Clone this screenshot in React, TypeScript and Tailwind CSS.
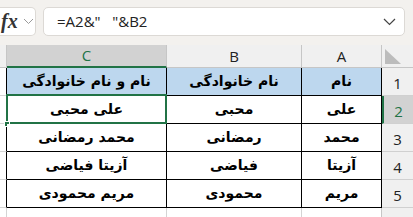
import React from 'react';

const rows = [
  { n: '1', c: 'نام و نام خانوادگی', b: 'نام خانوادگی', a: 'نام', head: true },
  { n: '2', c: 'علی محبی', b: 'محبی', a: 'علی', head: false },
  { n: '3', c: 'محمد رمضانی', b: 'رمضانی', a: 'محمد', head: false },
  { n: '4', c: 'آزیتا فیاضی', b: 'فیاضی', a: 'آزیتا', head: false },
  { n: '5', c: 'مریم محمودی', b: 'محمودی', a: 'مریم', head: false },
];

const arabic = { fontFamily: '"DejaVu Sans", "Noto Sans", sans-serif' };
const ui = { fontFamily: '"Open Sans", "Noto Sans", sans-serif' };

export default function App() {
  return (
    <div className="w-[413px] h-[217px] overflow-hidden bg-white select-none">
      {/* Formula bar */}
      <div className="h-[45px] bg-[#f3f1ee] flex items-start pt-[7px]">
        <div className="w-[36px] h-[29px] bg-white border border-l-0 border-[#dcd9d5] rounded-r-[5px] flex items-center">
          <span className="italic font-semibold text-[20px] leading-none text-[#333] ml-[1px] -mt-[2px]" style={{ fontFamily: '"Liberation Serif", serif' }}>fx</span>
          <svg className="ml-[5px]" width="11" height="7" viewBox="0 0 11 7" fill="none">
            <path d="M1 1l4.5 4.5L10 1" stroke="#9a9a9a" strokeWidth="1" />
          </svg>
        </div>
        <div className="ml-[7px] w-[362px] h-[29px] bg-white border border-[#dcd9d5] rounded-[5px] flex items-center pl-[13px] pr-[8px]">
          <span className="text-[15px] text-[#222] flex-1 whitespace-pre" style={ui}>=A2&amp;"   "&amp;B2</span>
          <svg width="13" height="8" viewBox="0 0 13 8" fill="none">
            <path d="M1 1l5.5 5.5L12 1" stroke="#444" strokeWidth="1.2" />
          </svg>
        </div>
      </div>

      {/* Column headers */}
      <div className="flex h-[23px] bg-[#f0f0f0] text-[15px] text-[#222]" style={ui}>
        <div className="w-[7px] border-r border-b border-[#c6c6c6]" />
        <div className="w-[160px] bg-[#d2d2d2] border-r border-[#c6c6c6] border-b-2 border-b-[#217346] flex items-center justify-center text-[#217346]">C</div>
        <div className="w-[135px] border-r border-b border-[#c6c6c6] flex items-center justify-center">B</div>
        <div className="w-[80px] border-r border-b border-[#c6c6c6] flex items-center justify-center">A</div>
        <div className="w-[31px] border-b border-[#c6c6c6] relative">
          <svg className="absolute left-[3px] top-[4px]" width="17" height="16" viewBox="0 0 17 16">
            <path d="M0 0V15H16Z" fill="#bcbcbc" />
          </svg>
        </div>
      </div>

      {/* Rows */}
      {rows.map((r) => (
        <div key={r.n} className="flex h-[28px]">
          <div className="w-[7px] border-r border-b border-r-black border-b-[#d4d4d4]" />
          <div className={`w-[160px] relative border-r border-b border-black flex items-center justify-center text-[14px] font-bold text-black ${r.head ? 'bg-[#bdd7ee]' : 'bg-white'}`} style={arabic} dir="rtl">
            {r.c}
            {r.n === '2' && (
              <>
                <div className="absolute -left-[1px] -top-[2px] -right-[1px] -bottom-[1px] border-2 border-[#217346]" />
                <div className="absolute -left-[3px] -bottom-[4px] w-[6px] h-[6px] bg-[#217346] border border-white" />
              </>
            )}
          </div>
          <div className={`w-[135px] border-r border-b border-black flex items-center justify-center text-[14px] font-bold text-black ${r.head ? 'bg-[#bdd7ee]' : 'bg-white'}`} style={arabic} dir="rtl">
            {r.b}
          </div>
          <div className={`w-[80px] border-r border-b border-black flex items-center justify-center text-[14px] font-bold text-black ${r.head ? 'bg-[#bdd7ee]' : 'bg-white'}`} style={arabic} dir="rtl">
            {r.a}
          </div>
          <div
            className={`w-[31px] border-b border-[#d0d0d0] flex items-end justify-center pb-[1px] text-[15px] ${r.n === '2' ? 'bg-[#d2d2d2] text-[#217346] border-l-2 border-l-[#217346]' : 'bg-[#f0f0f0] text-[#222]'}`}
            style={ui}
          >
            {r.n}
          </div>
        </div>
      ))}

      {/* Partial row 6 */}
      <div className="flex h-[28px]">
        <div className="w-[7px] border-r border-[#d4d4d4]" />
        <div className="w-[160px] border-r border-[#d4d4d4]" />
        <div className="w-[135px] border-r border-[#d4d4d4]" />
        <div className="w-[80px] border-r border-[#c6c6c6]" />
        <div className="w-[31px] bg-[#f0f0f0] flex items-end justify-center pb-[1px] text-[15px] text-[#222]" style={ui}>6</div>
      </div>
    </div>
  );
}
